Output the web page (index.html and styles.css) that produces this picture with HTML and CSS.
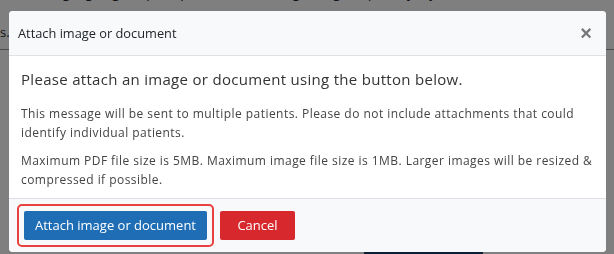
FILE: index.html
```html
<!DOCTYPE html>
<html lang="en">
<head>
    <meta charset="UTF-8">
    <title>Attach image or document</title>
    <link rel="stylesheet" href="styles.css">
</head>
<body>
    <!-- Page behind the dialog -->
    <div class="page">
        <p class="page-line">Messaging a group of patients, adding images quickly by</p>
        <p class="page-note">s.</p>
        <hr class="page-rule">
        <div class="page-actions">
            <span class="page-button"></span>
        </div>
    </div>

    <!-- Modal -->
    <div class="backdrop">
        <div class="modal">
            <div class="modal-header">
                <h5>Attach image or document</h5>
                <button class="close" type="button">&times;</button>
            </div>
            <div class="modal-body">
                <h4>Please attach an image or document using the button below.</h4>
                <p>This message will be sent to multiple patients. Please do not include attachments that could identify individual patients.</p>
                <p>Maximum PDF file size is 5MB. Maximum image file size is 1MB. Larger images will be resized &amp; compressed if possible.</p>
            </div>
            <div class="modal-footer">
                <span class="focus-ring">
                    <button class="btn btn-primary" type="button">Attach image or document</button>
                </span>
                <button class="btn btn-danger" type="button">Cancel</button>
            </div>
        </div>
    </div>
</body>
</html>
```
FILE: styles.css
```css
/* Global */
body {
    margin: 0;
    font-family: 'Open Sans', sans-serif;
    color: #212529;
    background: #fff;
    overflow: hidden;
}

/* Page behind the dialog */
.page {
    height: 254px;
    display: flex;
    flex-direction: column;
}

.page-line {
    margin: -16px 0 0 16px;
    font-size: 14px;
    line-height: 16px;
    letter-spacing: 1px;
    white-space: nowrap;
}

.page-note {
    margin: 24px 0 0 0;
    font-size: 13px;
    line-height: 16px;
}

.page-rule {
    margin: 9px 0 0;
    border: none;
    border-top: 1px solid #999;
}

.page-actions {
    margin-top: auto;
    padding-left: 364px;
}

.page-button {
    display: block;
    width: 119px;
    height: 2px;
    background: #1a3f6e;
}

/* Backdrop */
.backdrop {
    position: fixed;
    inset: 0;
    background: rgba(0, 0, 0, 0.5);
    padding: 11px 8px 0 9px;
}

.modal {
    background: #fff;
    border-radius: 4px;
    height: 241px;
    display: flex;
    flex-direction: column;
    overflow: hidden;
}

.modal-header {
    display: flex;
    align-items: center;
    justify-content: space-between;
    height: 44px;
    padding: 0 14px 0 9px;
    background: #f8f9fa;
    border-bottom: 1px solid #dee2e6;
}

.modal-header h5 {
    margin: 0;
    font-size: 12.8px;
    font-weight: 400;
    color: #212529;
}

.close {
    border: none;
    background: none;
    padding: 0;
    font-size: 20px;
    font-weight: 700;
    color: #777;
    line-height: 1;
}

.modal-body {
    padding: 13px 12px 0;
    flex: 1;
}

.modal-body h4 {
    margin: 0 0 15px;
    font-size: 15px;
    font-weight: 400;
    letter-spacing: 0.3px;
    color: #333;
}

.modal-body p {
    margin: 0 0 9px;
    font-size: 12px;
    line-height: 19px;
    letter-spacing: 0.45px;
    color: #444;
}

.modal-footer {
    display: flex;
    align-items: center;
    gap: 6px;
    height: 54px;
    padding: 0 8px;
    background: #f8f9fa;
    border-top: 1px solid #dee2e6;
}

.focus-ring {
    display: block;
    padding: 5px;
    border: 2px solid #e8413f;
    border-radius: 5px;
}

.btn {
    display: block;
    border: none;
    border-radius: 2px;
    height: 29px;
    font-family: 'Open Sans', sans-serif;
    font-size: 13px;
    font-weight: 500;
    color: #fff;
    cursor: pointer;
}

.btn-primary {
    width: 183px;
    background: #1e6db5;
}

.btn-danger {
    width: 75px;
    background: #d6282d;
}
```
